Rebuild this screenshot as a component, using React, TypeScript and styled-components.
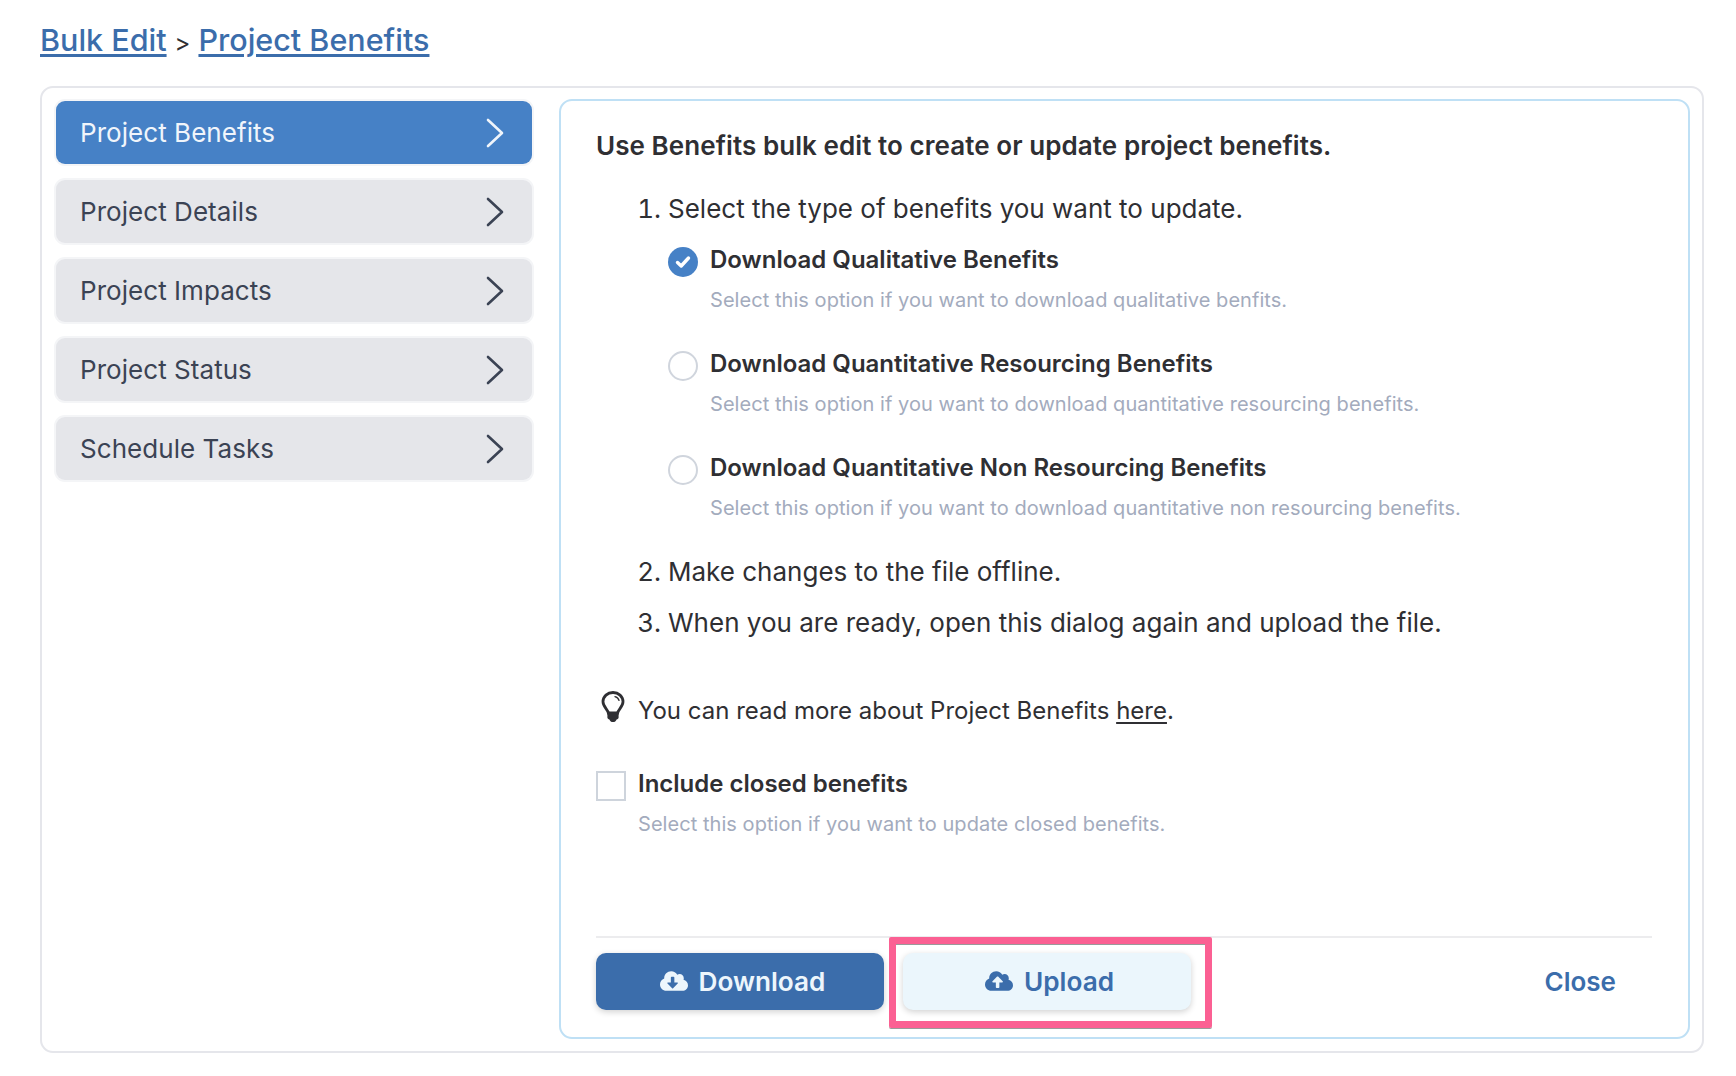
import React from 'react'
import styled, { createGlobalStyle } from 'styled-components'
import { FaCloudDownloadAlt, FaCloudUploadAlt } from 'react-icons/fa'

const GlobalStyle = createGlobalStyle`
  html, body {
    margin: 0;
    padding: 0;
    background: #fff;
    font-family: Inter, "Liberation Sans", sans-serif;
    color: #2f2f33;
  }
`

const NAV_ITEMS = ['Project Benefits', 'Project Details', 'Project Impacts', 'Project Status', 'Schedule Tasks']

const OPTIONS = [
  {
    title: 'Download Qualitative Benefits',
    hint: 'Select this option if you want to download qualitative benfits.',
    checked: true,
  },
  {
    title: 'Download Quantitative Resourcing Benefits',
    hint: 'Select this option if you want to download quantitative resourcing benefits.',
    checked: false,
  },
  {
    title: 'Download Quantitative Non Resourcing Benefits',
    hint: 'Select this option if you want to download quantitative non resourcing benefits.',
    checked: false,
  },
]

function Chevron() {
  return (
    <svg width="20" height="30" viewBox="0 0 20 30" fill="none">
      <path d="M3 2 L17 15 L3 28" stroke="currentColor" strokeWidth="2.6" strokeLinecap="round" strokeLinejoin="round" />
    </svg>
  )
}

function Bulb() {
  return (
    <BulbSvg viewBox="0 0 24 32" fill="none">
      <path
        d="M7.5 22.5 C7 18.5 2 16 2 10.8 C2 5.3 6.5 1.5 12 1.5 C17.5 1.5 22 5.3 22 10.8 C22 16 17 18.5 16.5 22.5"
        stroke="#2f2f33"
        strokeWidth="2.8"
        strokeLinecap="round"
      />
      <path d="M14 5.6 C16 6.1 17.5 7.6 18 9.4" stroke="#2f2f33" strokeWidth="1.4" strokeLinecap="round" />
      <path
        d="M6.4 20.5 H17.6 V26.5 C17.6 27.6 16.6 28.2 15.6 28.4 C15.1 30 13.6 31 12 31 C10.4 31 8.9 30 8.4 28.4 C7.4 28.2 6.4 27.6 6.4 26.5 Z"
        fill="#2f2f33"
      />
    </BulbSvg>
  )
}

export default function App() {
  return (
    <Page>
      <GlobalStyle />
      <Breadcrumb>
        <CrumbLink href="#">Bulk Edit</CrumbLink>
        <CrumbSep>&gt;</CrumbSep>
        <CrumbLink href="#">Project Benefits</CrumbLink>
      </Breadcrumb>

      <Shell>
        <Sidebar>
          {NAV_ITEMS.map((item, i) => (
            <NavItem key={item} $active={i === 0}>
              <span>{item}</span>
              <Chevron />
            </NavItem>
          ))}
        </Sidebar>

        <Content>
          <Main>
            <Heading>Use Benefits bulk edit to create or update project benefits.</Heading>
            <Steps>
              <Step>
                Select the type of benefits you want to update.
                <OptionList>
                  {OPTIONS.map(opt => (
                    <Option key={opt.title}>
                      <Radio $checked={opt.checked}>
                        {opt.checked && (
                          <svg width="16" height="14" viewBox="0 0 16 14" fill="none">
                            <path d="M2.5 7.5 L6.2 11 L13.5 3" stroke="#fff" strokeWidth="3.4" strokeLinecap="round" strokeLinejoin="round" />
                          </svg>
                        )}
                      </Radio>
                      <div>
                        <OptionTitle>{opt.title}</OptionTitle>
                        <Hint>{opt.hint}</Hint>
                      </div>
                    </Option>
                  ))}
                </OptionList>
              </Step>
              <Step>Make changes to the file offline.</Step>
              <Step>When you are ready, open this dialog again and upload the file.</Step>
            </Steps>

            <Tip>
              <Bulb />
              <span>
                You can read more about Project Benefits <TipLink href="#">here</TipLink>.
              </span>
            </Tip>

            <ClosedRow>
              <Checkbox />
              <div>
                <OptionTitle>Include closed benefits</OptionTitle>
                <Hint>Select this option if you want to update closed benefits.</Hint>
              </div>
            </ClosedRow>
          </Main>

          <Footer>
            <PrimaryButton>
              <FaCloudDownloadAlt size={28} />
              Download
            </PrimaryButton>
            <UploadWrap>
              <SecondaryButton>
                <FaCloudUploadAlt size={28} />
                Upload
              </SecondaryButton>
              <Highlight />
            </UploadWrap>
            <CloseButton>Close</CloseButton>
          </Footer>
        </Content>
      </Shell>
    </Page>
  )
}

const Page = styled.div`
  width: 1736px;
  height: 1076px;
  box-sizing: border-box;
  padding: 20px 32px 0 40px;
  overflow: hidden;
`

const Breadcrumb = styled.div`
  display: flex;
  align-items: baseline;
  gap: 8px;
  height: 40px;
  line-height: 40px;
  margin-bottom: 26px;
`

const CrumbLink = styled.a`
  font-size: 30.5px;
  font-weight: 500;
  color: #3b6dab;
  text-decoration: underline;
  text-decoration-thickness: 2.5px;
  text-underline-offset: 3px;
`

const CrumbSep = styled.span`
  font-size: 24px;
  color: #2f2f33;
`

const Shell = styled.div`
  display: flex;
  gap: 27px;
  height: 967px;
  box-sizing: border-box;
  padding: 11px 12px 12px 14px;
  border: 2px solid #e5e6eb;
  border-radius: 13px;
`

const Sidebar = styled.div`
  width: 476px;
  flex: none;
  display: flex;
  flex-direction: column;
  gap: 16px;
  margin-top: 2px;
`

const NavItem = styled.div<{ $active?: boolean }>`
  height: 63px;
  box-sizing: border-box;
  display: flex;
  align-items: center;
  justify-content: space-between;
  padding: 0 27px 0 24px;
  border-radius: 9px;
  font-size: 26px;
  letter-spacing: 0.05px;
  background: ${p => (p.$active ? '#4681c6' : '#e5e6ea')};
  color: ${p => (p.$active ? '#f0f5fb' : '#3b4354')};
  box-shadow: 0 0 0 2px #f4f5f7;
`

const Content = styled.div`
  flex: 1;
  display: flex;
  flex-direction: column;
  box-sizing: border-box;
  padding: 0 36px 0 35px;
  border: 2px solid #bfe0f5;
  border-radius: 13px;
  min-width: 0;
`

const Main = styled.div`
  flex: 1;
`

const Heading = styled.div`
  font-size: 26px;
  font-weight: 600;
  line-height: 34px;
  letter-spacing: 0.07px;
  margin-top: 28px;
`

const Steps = styled.ol`
  margin: 29px 0 0;
  padding: 0 0 0 72px;
  font-size: 26px;
  line-height: 34px;
`

const Step = styled.li`
  margin-top: 17px;
  &:first-child {
    margin-top: 0;
  }
`

const OptionList = styled.div`
  margin: 19px 0 33px;
  display: flex;
  flex-direction: column;
  gap: 35px;
`

const Option = styled.div`
  display: flex;
  gap: 12px;
`

const Radio = styled.div<{ $checked?: boolean }>`
  width: 30px;
  height: 30px;
  flex: none;
  box-sizing: border-box;
  border-radius: 50%;
  display: flex;
  align-items: center;
  justify-content: center;
  background: ${p => (p.$checked ? '#4681c6' : '#fff')};
  border: ${p => (p.$checked ? 'none' : '2px solid #d0d5dd')};
  margin-top: 2px;
`

const OptionTitle = styled.div`
  font-size: 24px;
  font-weight: 600;
  line-height: 30px;
`

const Hint = styled.div`
  font-size: 20px;
  line-height: 28px;
  letter-spacing: 0.05px;
  color: #a3abbd;
  margin-top: 11px;
`

const Tip = styled.div`
  display: flex;
  align-items: center;
  gap: 13px;
  margin-top: 54px;
  font-size: 24px;
  line-height: 34px;
`

const BulbSvg = styled.svg`
  width: 24px;
  height: 32px;
  margin-left: 5px;
  flex: none;
  margin-top: -8px;
`

const TipLink = styled.a`
  color: #2f2f33;
  text-decoration: underline;
  text-underline-offset: 3px;
`

const ClosedRow = styled.div`
  display: flex;
  gap: 12px;
  margin-top: 41px;
`

const Checkbox = styled.div`
  width: 30px;
  height: 30px;
  flex: none;
  box-sizing: border-box;
  border: 2px solid #ced4dc;
  margin-top: 2px;
`

const Footer = styled.div`
  display: flex;
  align-items: center;
  height: 101px;
  box-sizing: border-box;
  border-top: 2px solid #ececee;
  padding-top: 17px;
  padding-bottom: 30px;
`

const ButtonBase = styled.button`
  width: 288px;
  height: 57px;
  display: flex;
  align-items: center;
  justify-content: center;
  gap: 11px;
  border: none;
  border-radius: 10px;
  padding: 0 0 0 5px;
  font-family: inherit;
  font-size: 26.2px;
  font-weight: 600;
  box-shadow: 0 2px 6px rgba(0, 0, 0, 0.18);
`

const PrimaryButton = styled(ButtonBase)`
  background: #3b6dab;
  color: #edf6fc;
`

const SecondaryButton = styled(ButtonBase)`
  background: #ebf6fc;
  color: #3b6dab;
`

const UploadWrap = styled.div`
  position: relative;
  margin-left: 19px;
`

const Highlight = styled.div`
  position: absolute;
  left: -14px;
  right: -21px;
  top: -16px;
  bottom: -18px;
  border: 7px solid #fb6093;
  border-radius: 2px;
  box-shadow: inset 0 1px 0 #9a9a9a, 0 1px 0 #9a9a9a;
  pointer-events: none;
`

const CloseButton = styled.button`
  margin-left: auto;
  margin-right: 36px;
  background: none;
  border: none;
  padding: 0;
  font-family: inherit;
  font-size: 26px;
  font-weight: 600;
  color: #3b6dab;
`
